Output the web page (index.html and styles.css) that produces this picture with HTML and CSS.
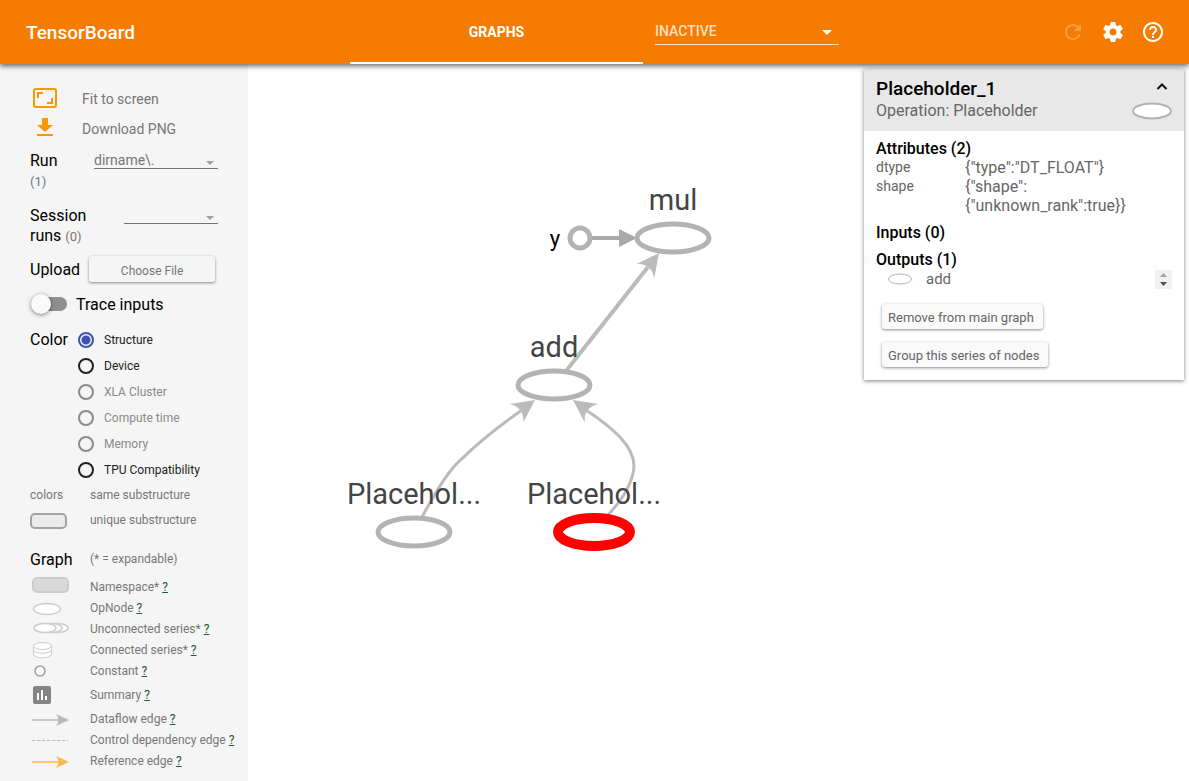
FILE: index.html
```html
<!DOCTYPE html>
<html lang="en">
<head>
  <meta charset="utf-8">
  <title>TensorBoard</title>
  <link rel="stylesheet" href="styles.css">
</head>
<body>
  <header class="toolbar">
    <h1 class="logo">TensorBoard</h1>
    <nav class="tabs">
      <a class="tab active" href="#graphs">GRAPHS</a>
    </nav>
    <div class="dropdown inactive">
      <select aria-label="Inactive dashboards">
        <option>INACTIVE</option>
      </select>
    </div>
    <div class="actions">
      <button type="button" aria-label="Reload" disabled>
        <svg viewBox="0 0 24 24"><path d="M17.65 6.35C16.2 4.9 14.21 4 12 4c-4.42 0-7.99 3.58-7.99 8s3.57 8 7.99 8c3.73 0 6.84-2.55 7.73-6h-2.08c-.82 2.33-3.04 4-5.65 4-3.31 0-6-2.69-6-6s2.69-6 6-6c1.66 0 3.14.69 4.22 1.78L13 11h7V4l-2.35 2.35z"/></svg>
      </button>
      <button type="button" aria-label="Settings">
        <svg viewBox="0 0 24 24"><path d="M19.43 12.98c.04-.32.07-.64.07-.98s-.03-.66-.07-.98l2.11-1.65c.19-.15.24-.42.12-.64l-2-3.46c-.12-.22-.39-.3-.61-.22l-2.49 1c-.52-.4-1.08-.73-1.69-.98l-.38-2.65C14.46 2.18 14.25 2 14 2h-4c-.25 0-.46.18-.49.42l-.38 2.65c-.61.25-1.17.59-1.69.98l-2.49-1c-.23-.09-.49 0-.61.22l-2 3.46c-.13.22-.07.49.12.64l2.11 1.65c-.04.32-.07.65-.07.98s.03.66.07.98l-2.11 1.65c-.19.15-.24.42-.12.64l2 3.46c.12.22.39.3.61.22l2.49-1c.52.4 1.08.73 1.69.98l.38 2.65c.03.24.24.42.49.42h4c.25 0 .46-.18.49-.42l.38-2.65c.61-.25 1.17-.59 1.69-.98l2.49 1c.23.09.49 0 .61-.22l2-3.46c.12-.22.07-.49-.12-.64l-2.11-1.65zM12 15.5c-1.93 0-3.5-1.57-3.5-3.5s1.57-3.5 3.5-3.5 3.5 1.57 3.5 3.5-1.57 3.5-3.5 3.5z"/></svg>
      </button>
      <button type="button" aria-label="Help">
        <svg viewBox="0 0 24 24"><path d="M11 18h2v-2h-2v2zm1-16C6.48 2 2 6.48 2 12s4.48 10 10 10 10-4.48 10-10S17.52 2 12 2zm0 18c-4.41 0-8-3.59-8-8s3.59-8 8-8 8 3.59 8 8-3.59 8-8 8zm0-14c-2.21 0-4 1.79-4 4h2c0-1.1.9-2 2-2s2 .9 2 2c0 2-3 1.75-3 5h2c0-2.25 3-2.5 3-5 0-2.21-1.79-4-4-4z"/></svg>
      </button>
    </div>
  </header>

  <main class="dashboard">
    <aside class="sidebar">
      <button type="button" class="tool">
        <svg viewBox="0 0 30 24"><path d="M6 1h18q3 0 3 3v14q0 3-3 3H6q-3 0-3-3V4q0-3 3-3zm0 2q-1 0-1 1v14q0 1 1 1h18q1 0 1-1V4q0-1-1-1zM7 5h6v2H9v4H7zM23 17h-6v-2h4v-4h2z"/></svg>
        Fit to screen
      </button>
      <button type="button" class="tool">
        <svg viewBox="0 0 30 24"><path d="M23 8h-5V1h-6v7H7l8 7zM7 17v2h16v-2z"/></svg>
        Download PNG
      </button>

      <div class="field">
        <label for="run">Run<br><small>(1)</small></label>
        <div class="dropdown run">
          <select id="run">
            <option>dirname\.</option>
          </select>
        </div>
      </div>
      <div class="field">
        <label for="session">Session<br>runs <small>(0)</small></label>
        <div class="dropdown session">
          <select id="session">
            <option></option>
          </select>
        </div>
      </div>
      <div class="upload">
        <span>Upload</span>
        <button type="button" class="raised">Choose File</button>
      </div>
      <label class="trace">
        <input type="checkbox" class="toggle">
        Trace inputs
      </label>

      <div class="color-by">
        <span class="title" id="color-title">Color</span>
        <div class="radios" role="radiogroup" aria-labelledby="color-title">
          <label><input type="radio" name="color" checked> Structure</label>
          <label><input type="radio" name="color"> Device</label>
          <label><input type="radio" name="color" disabled> XLA Cluster</label>
          <label><input type="radio" name="color" disabled> Compute time</label>
          <label><input type="radio" name="color" disabled> Memory</label>
          <label><input type="radio" name="color"> TPU Compatibility</label>
        </div>
      </div>
      <div class="substructure">
        <span>colors</span>
        <span>same substructure</span>
        <span class="swatch"></span>
        <span>unique substructure</span>
      </div>

      <div class="legend-head">
        <span class="title">Graph</span>
        <span>(* = expandable)</span>
      </div>
      <ul class="legend">
        <li>
          <svg viewBox="0 0 40 20"><rect x="3" y="1" width="35" height="14" rx="4" fill="#d9d9d9" stroke="#ccc" stroke-width="2"/></svg>
          <span>Namespace* <a href="#namespace">?</a></span>
        </li>
        <li>
          <svg viewBox="0 0 40 20"><ellipse cx="17" cy="11" rx="13.5" ry="5.5" fill="#fff" stroke="#ccc" stroke-width="1.5"/></svg>
          <span>OpNode <a href="#opnode">?</a></span>
        </li>
        <li>
          <svg viewBox="0 0 40 20" fill="#fff" stroke="#ccc" stroke-width="1.5"><ellipse cx="27" cy="9" rx="11" ry="4.5"/><ellipse cx="21" cy="9" rx="11" ry="4.5"/><ellipse cx="15" cy="9" rx="11" ry="4.5"/></svg>
          <span>Unconnected series* <a href="#unconnected">?</a></span>
        </li>
        <li>
          <svg viewBox="0 0 40 20" fill="#fff" stroke="#ccc"><path d="M3.5 5v9c0 5 18 5 18 0V5"/><path d="M3.5 9.5c0 5 18 5 18 0V5h-18z"/><ellipse cx="12.5" cy="6" rx="9" ry="3.5"/></svg>
          <span>Connected series* <a href="#connected">?</a></span>
        </li>
        <li>
          <svg viewBox="0 0 40 20"><circle cx="10" cy="10" r="5" fill="#fff" stroke="#999" stroke-width="1.5"/></svg>
          <span>Constant <a href="#constant">?</a></span>
        </li>
        <li class="summary">
          <svg viewBox="0 0 40 20"><rect x="3" y="1" width="18" height="18" rx="2" fill="#848484"/><path d="M7 8h2v7H7zM11 5h2v10h-2zM15 11h2v4h-2z" fill="#fff"/></svg>
          <span>Summary <a href="#summary">?</a></span>
        </li>
        <li>
          <svg viewBox="0 0 40 20"><path d="M2 11h28" stroke="#b9b9b9" stroke-width="1.5"/><path d="M26 5l13 6-13 6q5-6 0-12z" fill="#b9b9b9"/></svg>
          <span>Dataflow edge <a href="#dataflow">?</a></span>
        </li>
        <li>
          <svg viewBox="0 0 40 20"><path d="M2 10.5h36" stroke="#bbb" stroke-dasharray="3.5 1.5"/></svg>
          <span>Control dependency edge <a href="#control">?</a></span>
        </li>
        <li>
          <svg viewBox="0 0 40 20"><path d="M2 11h28" stroke="#ffb74d" stroke-width="1.5"/><path d="M26 5l13 6-13 6q5-6 0-12z" fill="#ffb74d"/></svg>
          <span>Reference edge <a href="#reference">?</a></span>
        </li>
      </ul>
    </aside>

    <section class="canvas">
      <svg class="graph" role="img" aria-label="Graph">
        <defs>
          <marker id="arrow" viewBox="0 0 10 10" refX="10" refY="5" markerWidth="23" markerHeight="23" markerUnits="userSpaceOnUse" orient="auto">
            <path d="M0 0L10 5L0 10C3 7 3 3 0 0z"/>
          </marker>
        </defs>
        <g class="edges">
          <path class="wide" d="M318 307L400 203"/>
          <path d="M174 453C191 422 202 404 217 392C234 375 250 363 274 346"/>
          <path d="M360 451C374 436 385 420 386 402C386 382 365 364 338 346"/>
          <path class="tip" d="M398 206L411 189"/>
          <path class="tip" d="M269 349L287 336"/>
          <path class="tip" d="M343 349L325 336"/>
        </g>
        <path class="constant-edge" d="M343 174h30"/>
        <path class="constant-tip" d="M371 165l18 9-18 9z"/>
        <g class="nodes">
          <circle cx="332" cy="174" r="10"/>
          <ellipse cx="425" cy="174" rx="36" ry="14"/>
          <ellipse cx="306" cy="321" rx="36" ry="14"/>
          <ellipse cx="166" cy="468" rx="36" ry="14"/>
          <ellipse class="selected" cx="346" cy="468" rx="36" ry="14"/>
        </g>
        <g class="names">
          <text class="constant" x="307" y="182">y</text>
          <text x="425" y="146">mul</text>
          <text x="306" y="293">add</text>
          <text x="166" y="440">Placehol...</text>
          <text x="346" y="440">Placehol...</text>
        </g>
      </svg>

      <article class="info">
        <header class="info-head">
          <div>
            <h2>Placeholder_1</h2>
            <p>Operation: Placeholder</p>
          </div>
          <div class="info-side">
            <button type="button" aria-label="Collapse">
              <svg viewBox="0 0 20 20"><path d="M5.5 12L10 7.5L14.5 12" fill="none" stroke="#111" stroke-width="2"/></svg>
            </button>
            <svg class="op" viewBox="0 0 40 18"><ellipse cx="20" cy="9" rx="19" ry="7.5" fill="#fff" stroke="#b3b3b3" stroke-width="2"/></svg>
          </div>
        </header>
        <div class="info-body">
          <h3>Attributes (2)</h3>
          <table>
            <tr><th>dtype</th><td>{"type":"DT_FLOAT"}</td></tr>
            <tr><th>shape</th><td>{"shape":<br>{"unknown_rank":true}}</td></tr>
          </table>
          <h3>Inputs (0)</h3>
          <h3>Outputs (1)</h3>
          <div class="output">
            <svg viewBox="0 0 24 12"><ellipse cx="12" cy="6" rx="11.5" ry="5" fill="#fff" stroke="#b3b3b3"/></svg>
            <a href="#add">add</a>
            <svg class="spinner" viewBox="0 0 17 19"><path d="M5 7h7L8.500 3z" fill="#a3a3a3"/><path d="M5 12h7l-3.500 4z" fill="#505050"/></svg>
          </div>
          <button type="button" class="raised">Remove from main graph</button>
          <button type="button" class="raised">Group this series of nodes</button>
        </div>
      </article>
    </section>
  </main>
</body>
</html>
```
FILE: styles.css
```css
* {
  box-sizing: border-box;
}

body {
  margin: 0;
  height: 100vh;
  display: flex;
  flex-direction: column;
  font-family: Roboto, "Liberation Sans", sans-serif;
  font-size: 12px;
  color: #000;
  background: #fff;
}

h1, h2, h3, p, ul {
  margin: 0;
  padding: 0;
  font-weight: 500;
}

button, select {
  font-family: inherit;
  border: none;
  background: none;
  padding: 0;
  margin: 0;
  cursor: pointer;
}

/* top bar */
.toolbar {
  flex: none;
  display: flex;
  align-items: center;
  height: 64px;
  padding-right: 16px;
  background: #f57c00;
  color: #fff;
  box-shadow: 0 2px 5px rgba(0, 0, 0, 0.6);
  z-index: 2;
}

.logo {
  width: 350px;
  padding-left: 26px;
  font-size: 19px;
}

.tabs {
  width: 293px;
  align-self: stretch;
  display: flex;
}

.tab {
  flex: 1;
  display: flex;
  align-items: center;
  justify-content: center;
  padding-top: 2px;
  border-bottom: 2px solid #fff;
  color: #fff;
  font-size: 14px;
  font-weight: 700;
  text-decoration: none;
}

.dropdown {
  position: relative;
}

.dropdown select {
  display: block;
  width: 100%;
  appearance: none;
  outline: none;
  border-radius: 0;
}

.dropdown::after {
  content: "";
  position: absolute;
  right: 4px;
  top: 10px;
  border: 4px solid transparent;
  border-top-color: #a0a0a0;
  border-bottom: none;
  pointer-events: none;
}

.inactive {
  width: 184px;
  margin-left: 12px;
}

.inactive select {
  height: 26px;
  padding-bottom: 2px;
  border-bottom: 1px solid #fde3c8;
  color: #fddfc0;
  font-size: 14px;
  font-weight: 500;
}

.inactive::after {
  right: 7px;
  top: 11px;
  border-width: 5px;
  border-top-color: #fff;
  border-bottom: none;
}

.actions {
  display: flex;
  margin-left: auto;
}

.actions button {
  width: 40px;
  height: 40px;
  padding: 8px;
}

.actions button:disabled {
  opacity: 0.25;
}

.actions svg {
  display: block;
  fill: #fff;
}

/* left controls */
.dashboard {
  flex: 1;
  min-height: 0;
  display: flex;
}

.sidebar {
  flex: none;
  width: 248px;
  padding: 20px 0 0 30px;
  background: #f5f5f5;
  color: #777;
  overflow: hidden;
}

.tool {
  display: flex;
  align-items: center;
  gap: 22px;
  height: 30px;
  color: #777;
  font-size: 14px;
}

.tool svg {
  width: 30px;
  height: 24px;
  fill: #ff9800;
}

.field {
  display: flex;
  justify-content: space-between;
  align-items: flex-start;
  width: 188px;
  margin-top: 7px;
  margin-bottom: 14px;
}

.field label {
  width: 60px;
  color: #000;
  font-size: 16px;
  line-height: 20px;
}

.field small {
  color: #777;
  font-size: 13px;
}

.field select {
  height: 18px;
  border-bottom: 1px solid #737373;
  color: #777;
  font-size: 14px;
}

.field + .field {
  margin-bottom: 8px;
}

.run {
  width: 124px;
}

.session {
  width: 94px;
}

.upload {
  display: flex;
  align-items: center;
  gap: 9px;
  height: 28px;
  color: #000;
  font-size: 16px;
}

.raised {
  height: 26px;
  padding: 2px 9px 0 6px;
  border-radius: 3px;
  background: #fafafa;
  color: #666;
  font-size: 13px;
  box-shadow: 0 1px 3px rgba(0, 0, 0, 0.45);
}

.upload .raised {
  width: 126px;
  padding: 4px 0 0;
  background: #f5f5f5;
  color: #777;
  font-size: 12px;
}

.trace {
  display: flex;
  align-items: center;
  gap: 9px;
  height: 42px;
  margin-bottom: 2px;
  color: #000;
  font-size: 16px;
}

.toggle {
  appearance: none;
  position: relative;
  width: 35px;
  height: 14px;
  margin: 0 0 0 2px;
  border-radius: 7px;
  background: #8e8e8e;
}

.toggle::before {
  content: "";
  position: absolute;
  left: -1px;
  top: -3px;
  width: 20px;
  height: 20px;
  border-radius: 50%;
  background: #fafafa;
  box-shadow: 0 1px 4px rgba(0, 0, 0, 0.5);
}

.title {
  color: #000;
  font-size: 16px;
}

.color-by {
  display: flex;
  line-height: 26px;
}

.color-by .title {
  width: 48px;
}

.radios label {
  display: flex;
  align-items: center;
  gap: 10px;
  height: 26px;
  color: #212121;
}

.radios label:has(:disabled) {
  color: #8a8a8a;
}

.radios input {
  appearance: none;
  width: 16px;
  height: 16px;
  margin: 0;
  border: 2px solid #212121;
  border-radius: 50%;
}

.radios input:checked {
  border-color: #3f51b5;
  background: radial-gradient(circle, #3f51b5 4px, transparent 5px);
}

.radios input:disabled {
  border-color: #8a8a8a;
}

.substructure {
  display: grid;
  grid-template-columns: 60px 1fr;
  align-items: center;
  line-height: 25px;
}

.swatch {
  width: 37px;
  height: 16px;
  border: 2px solid #a3a3a3;
  border-radius: 5px;
  background: #ebebeb;
}

.legend-head {
  display: grid;
  grid-template-columns: 60px 1fr;
  align-items: center;
  height: 30px;
  margin-top: 11px;
}

.legend {
  list-style: none;
  margin-top: 2px;
  font-weight: 400;
}

.legend li {
  display: grid;
  grid-template-columns: 60px 1fr;
  align-items: center;
  height: 21px;
  white-space: nowrap;
}

.legend .summary {
  height: 27px;
}

.legend svg {
  width: 40px;
  height: 20px;
}

.legend a {
  color: #24573a;
}

/* graph */
.canvas {
  position: relative;
  flex: 1;
  min-width: 0;
}

.graph {
  display: block;
  width: 100%;
  height: 100%;
}

.edges path {
  fill: none;
  stroke: #bbb;
  stroke-width: 3;
}

.edges .wide {
  stroke-width: 4;
}

.edges .tip {
  stroke: none;
  marker-end: url(#arrow);
}

.constant-edge {
  stroke: #a9a9a9;
  stroke-width: 4;
}

#arrow path {
  fill: #bbb;
}

.constant-tip {
  fill: #a9a9a9;
}

.nodes circle,
.nodes ellipse {
  fill: #fff;
  stroke: #b3b3b3;
  stroke-width: 5;
}

.nodes .selected {
  stroke: #f00;
  stroke-width: 10;
}

.names text {
  fill: #444;
  font-size: 29px;
  text-anchor: middle;
}

.names .constant {
  fill: #000;
  font-size: 22px;
}

/* node details card */
.info {
  position: absolute;
  top: 5px;
  right: 5px;
  width: 320px;
  background: #fff;
  color: #666;
  font-size: 15px;
  box-shadow: 0 1px 4px rgba(0, 0, 0, 0.5);
}

.info-head {
  display: flex;
  justify-content: space-between;
  padding: 8px 12px 10px;
  background: #e8e8e8;
}

.info-head h2 {
  color: #000;
  font-size: 19px;
  line-height: 24px;
}

.info-head p {
  font-size: 16px;
  font-weight: 400;
  line-height: 20px;
}

.info-side {
  display: flex;
  flex-direction: column;
  align-items: center;
  width: 40px;
}

.info-side button {
  width: 20px;
  height: 20px;
  margin-left: 20px;
}

.info-side svg {
  display: block;
}

.op {
  width: 40px;
  height: 18px;
  margin-top: 5px;
}

.info-body {
  padding: 8px 12px 13px;
}

.info-body h3 {
  color: #000;
  font-size: 16px;
  line-height: 19px;
}

.info-body table {
  border-spacing: 0;
  margin-bottom: 8px;
  line-height: 19px;
}

.info-body th {
  width: 89px;
  padding: 0;
  font-size: 14px;
  font-weight: 400;
  text-align: left;
  vertical-align: top;
}

.info-body td {
  padding: 0;
  font-size: 16px;
}

.info-body h3 + h3 {
  margin-top: 8px;
}

.output {
  display: flex;
  align-items: center;
  height: 20px;
  margin-bottom: 15px;
  padding-left: 12px;
}

.output svg {
  width: 24px;
  height: 12px;
}

.output a {
  margin-left: 14px;
  color: #666;
  text-decoration: none;
}

.output .spinner {
  width: 17px;
  height: 19px;
  margin-left: auto;
  background: #f1f1f1;
}

.info .raised {
  display: block;
  height: 25px;
  margin-left: 6px;
}

.info .raised + .raised {
  margin-top: 13px;
}
```
